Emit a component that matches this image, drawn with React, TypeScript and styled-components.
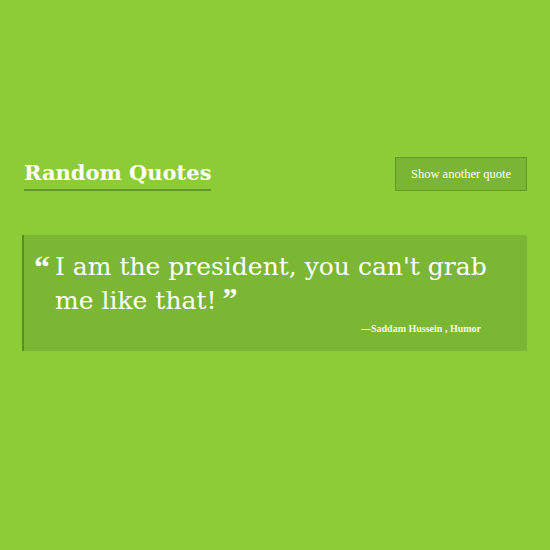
import React from "react";
import styled, { createGlobalStyle } from "styled-components";

const Global = createGlobalStyle`
  html, body { margin: 0; padding: 0; }
  body { background: #8ccc36; width: 550px; height: 550px; overflow: hidden; }
`;

const Page = styled.div`
  width: 550px;
  height: 550px;
  padding: 157px 23px 0 22px;
  box-sizing: border-box;
  display: flex;
  flex-direction: column;
  gap: 44px;
`;

const Header = styled.div`
  display: flex;
  justify-content: space-between;
  align-items: flex-start;
  padding-left: 2px;
`;

const Title = styled.h1`
  margin: 0;
  font-family: "DejaVu Serif", "Liberation Serif", serif;
  font-weight: bold;
  font-size: 21px;
  line-height: 30px;
  color: #ffffff;
  border-bottom: 2px solid #5f9a22;
  padding-bottom: 1px;
  margin-top: 1px;
`;

const Button = styled.button`
  width: 132px;
  height: 34px;
  background: #7ab634;
  border: 1px solid #5f9a22;
  color: #ffffff;
  font-family: "Liberation Serif", "DejaVu Serif", serif;
  font-size: 12.5px;
  padding: 0;
  cursor: pointer;
`;

const Card = styled.div`
  background: #7bb634;
  border-left: 2px solid #5a8e22;
  border-radius: 0 2px 2px 0;
  height: 116px;
  box-sizing: border-box;
  padding: 15px 20px 0 10px;
  display: flex;
  flex-direction: column;
`;

const QuoteRow = styled.div`
  display: flex;
  align-items: flex-start;
`;

const OpenMark = styled.span`
  font-family: "Liberation Serif", serif;
  font-weight: bold;
  font-size: 32px;
  line-height: 36px;
  color: #ffffff;
  width: 21px;
  flex: none;
  margin-top: -1px;
`;

const QuoteText = styled.p`
  margin: 0;
  font-family: "DejaVu Serif", "Liberation Serif", serif;
  font-size: 25px;
  line-height: 33px;
  color: #ffffff;
  width: 455px;
`;

const CloseMark = styled.span`
  font-family: "Liberation Serif", serif;
  font-weight: bold;
  font-size: 30px;
  line-height: 1;
  vertical-align: 1px;
  margin-left: 6px;
`;

const Author = styled.div`
  align-self: flex-end;
  margin-right: 26px;
  margin-top: 6px;
  font-family: "Liberation Serif", "DejaVu Serif", serif;
  font-weight: bold;
  font-size: 10px;
  color: #f4fae8;
`;

export default function App() {
  return (
    <>
      <Global />
      <Page>
        <Header>
          <Title>Random Quotes</Title>
          <Button>Show another quote</Button>
        </Header>
        <Card>
          <QuoteRow>
            <OpenMark>“</OpenMark>
            <QuoteText>
              I am the president, you can't grab me like that!
              <CloseMark>”</CloseMark>
            </QuoteText>
          </QuoteRow>
          <Author>—Saddam Hussein , Humor</Author>
        </Card>
      </Page>
    </>
  );
}
